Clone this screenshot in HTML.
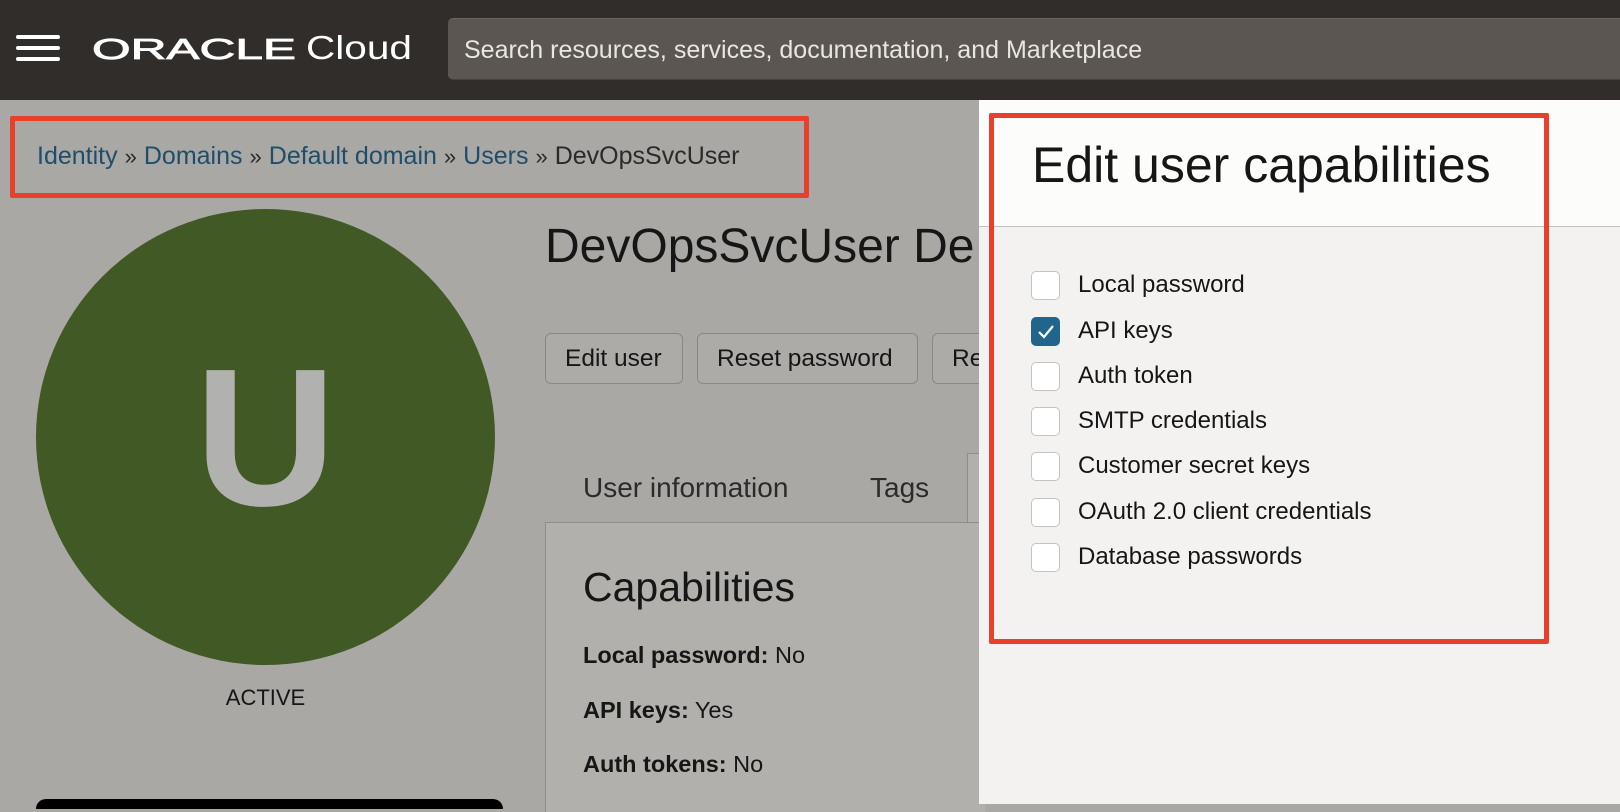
<!DOCTYPE html>
<html><head><meta charset="utf-8"><style>
*{margin:0;padding:0;box-sizing:border-box}
body{width:1620px;height:804px;overflow:hidden;position:relative;background:#a9a8a5;font-family:"Liberation Sans",Arial,sans-serif}
.abs{position:absolute}
.hdr{left:0;top:0;width:1620px;height:100px;background:#312d2a}
.ham{left:16px;width:44px;height:4px;background:#fff;border-radius:2px}
.search{left:448px;top:18px;width:1172px;height:62px;background:#5b5652;border-radius:5px 0 0 5px;color:#e8e6e3;font-size:25px;line-height:62px;padding-left:16px;border-top:1px solid #6a655f;border-bottom:1px solid #46423e}
.red{border:5px solid #e8402a;border-radius:2px}
.crumb{left:37px;top:142px;font-size:25px;color:#2a2a2a;white-space:nowrap}
.crumb a{color:#1e4e6b;text-decoration:none}
.crumb span.s{color:#2a2a2a;font-size:22px;margin:0 7px}
.btn{top:333px;height:51px;border:1px solid #888;border-radius:6px;background:#acaba8;font-size:24.5px;line-height:49px;color:#161616;padding-left:19px;overflow:hidden;white-space:nowrap}
.lbl{font-size:23.5px;color:#161616;left:583px}
.cb{left:1031px;width:29px;height:29px;border:1px solid #c4c3c1;border-radius:5px;background:#fff}
.cl{left:1078px;font-size:24px;color:#161616;white-space:nowrap}
</style></head><body>
<div class="abs hdr"></div>
<div class="abs ham" style="top:35px"></div>
<div class="abs ham" style="top:46px"></div>
<div class="abs ham" style="top:57px"></div>
<svg class="abs" style="left:90px;top:30px" width="330" height="40">
<text x="2" y="29" font-family="Liberation Sans" font-size="29" fill="#fff" textLength="204" lengthAdjust="spacingAndGlyphs" stroke="#fff" stroke-width="0.8">ORACLE</text>
<text x="216" y="29" font-family="Liberation Sans" font-size="33" fill="#fff" textLength="106" lengthAdjust="spacingAndGlyphs">Cloud</text>
</svg>
<div class="abs search">Search resources, services, documentation, and Marketplace</div>

<div class="abs red" style="left:10px;top:116px;width:799px;height:82px"></div>
<div class="abs crumb"><a>Identity</a><span class="s">»</span><a>Domains</a><span class="s">»</span><a>Default domain</a><span class="s">»</span><a>Users</a><span class="s">»</span>DevOpsSvcUser</div>

<div class="abs" style="left:36px;top:209px;width:459px;height:456px;border-radius:50%;background:#415924"></div>
<div class="abs" style="left:36px;top:318px;width:459px;text-align:center;font-size:196px;font-weight:bold;line-height:240px;color:#b1b1b0">U</div>
<div class="abs" style="left:36px;top:685px;width:459px;text-align:center;font-size:22px;color:#161616">ACTIVE</div>
<div class="abs" style="left:36px;top:799px;width:467px;height:10px;background:#000;border-radius:12px 12px 0 0"></div>

<div class="abs" style="left:545px;top:219px;font-size:48px;color:#161616;white-space:nowrap">DevOpsSvcUser De</div>
<div class="abs btn" style="left:545px;width:138px">Edit user</div>
<div class="abs btn" style="left:697px;width:221px">Reset password</div>
<div class="abs btn" style="left:932px;width:60px">Re</div>

<div class="abs" style="left:583px;top:472px;font-size:28px;color:#2b2b2b">User information</div>
<div class="abs" style="left:870px;top:472px;font-size:28px;color:#2b2b2b">Tags</div>
<div class="abs" style="left:967px;top:453px;width:20px;height:70px;border-left:1px solid #8e8d8b;border-top:1px solid #8e8d8b;background:#b1b0ad"></div>
<div class="abs" style="left:545px;top:522px;width:440px;height:290px;background:#b1b0ad;border-left:1px solid #8e8d8b;border-top:1px solid #8e8d8b"></div>
<div class="abs" style="left:583px;top:564px;font-size:41px;color:#161616">Capabilities</div>
<div class="abs lbl" style="top:642px"><b>Local password:</b> No</div>
<div class="abs lbl" style="top:697px"><b>API keys:</b> Yes</div>
<div class="abs lbl" style="top:751px"><b>Auth tokens:</b> No</div>

<div class="abs" style="left:979px;top:100px;width:641px;height:704px;background:#f3f2f1"></div>
<div class="abs" style="left:979px;top:100px;width:641px;height:127px;background:#fcfcfb;border-bottom:1px solid #c2c1bf"></div>
<div class="abs" style="left:1032px;top:136px;font-size:50px;color:#161616;white-space:nowrap">Edit user capabilities</div>

<div class="abs cb" style="top:271px"></div><div class="abs cl" style="top:271px">Local password</div>
<div class="abs cb" style="top:317px;background:#22658c;border-color:#22658c"><svg width="27" height="27" viewBox="0 0 27 27"><path d="M7 14l5 5 9-11" stroke="#fff" stroke-width="2.2" fill="none"/></svg></div><div class="abs cl" style="top:317px">API keys</div>
<div class="abs cb" style="top:362px"></div><div class="abs cl" style="top:362px">Auth token</div>
<div class="abs cb" style="top:407px"></div><div class="abs cl" style="top:407px">SMTP credentials</div>
<div class="abs cb" style="top:452px"></div><div class="abs cl" style="top:452px">Customer secret keys</div>
<div class="abs cb" style="top:498px"></div><div class="abs cl" style="top:498px">OAuth 2.0 client credentials</div>
<div class="abs cb" style="top:543px"></div><div class="abs cl" style="top:543px">Database passwords</div>

<div class="abs red" style="left:989px;top:113px;width:560px;height:531px"></div>
</body></html>
